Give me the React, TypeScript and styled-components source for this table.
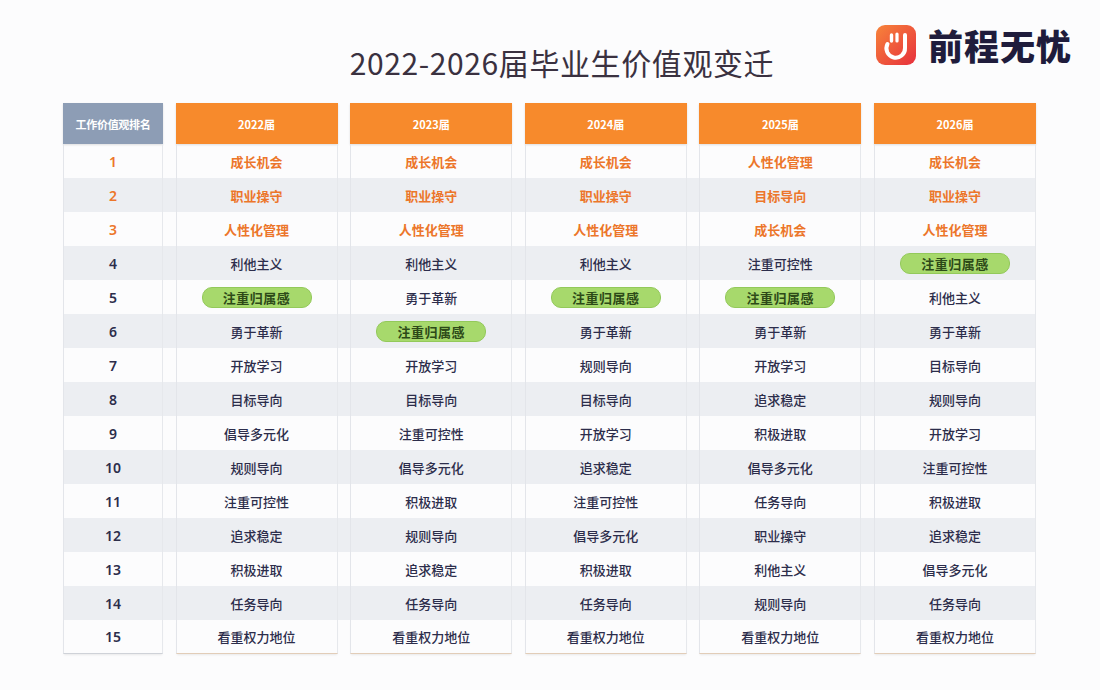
import { FC } from "react";
import styled, { createGlobalStyle } from "styled-components";

const GlobalStyle = createGlobalStyle`
  html, body {
    margin: 0;
    padding: 0;
    background: #fcfcfd;
  }
  body {
    font-family: "Noto Sans CJK SC", "Noto Sans", sans-serif;
  }
`;

const years = ["2022届", "2023届", "2024届", "2025届", "2026届"];

const columns: string[][] = [
  ["成长机会", "职业操守", "人性化管理", "利他主义", "注重归属感", "勇于革新", "开放学习", "目标导向", "倡导多元化", "规则导向", "注重可控性", "追求稳定", "积极进取", "任务导向", "看重权力地位"],
  ["成长机会", "职业操守", "人性化管理", "利他主义", "勇于革新", "注重归属感", "开放学习", "目标导向", "注重可控性", "倡导多元化", "积极进取", "规则导向", "追求稳定", "任务导向", "看重权力地位"],
  ["成长机会", "职业操守", "人性化管理", "利他主义", "注重归属感", "勇于革新", "规则导向", "目标导向", "开放学习", "追求稳定", "注重可控性", "倡导多元化", "积极进取", "任务导向", "看重权力地位"],
  ["人性化管理", "目标导向", "成长机会", "注重可控性", "注重归属感", "勇于革新", "开放学习", "追求稳定", "积极进取", "倡导多元化", "任务导向", "职业操守", "利他主义", "规则导向", "看重权力地位"],
  ["成长机会", "职业操守", "人性化管理", "注重归属感", "利他主义", "勇于革新", "目标导向", "规则导向", "开放学习", "注重可控性", "积极进取", "追求稳定", "倡导多元化", "任务导向", "看重权力地位"],
];

const HIGHLIGHT = "注重归属感";

const Logo: FC = () => (
  <LogoWrap>
    <svg width="40" height="40" viewBox="0 0 40 40">
      <defs>
        <linearGradient id="lg" x1="0" y1="0" x2="1" y2="1">
          <stop offset="0" stopColor="#f7843a" />
          <stop offset="1" stopColor="#e7303d" />
        </linearGradient>
      </defs>
      <rect x="0" y="0" width="40" height="40" rx="9" fill="url(#lg)" />
      <path
        d="M11.5 19 a9.3 9.3 0 1 0 17.5 4 V10"
        fill="none"
        stroke="#fff"
        strokeWidth="4"
        strokeLinecap="round"
      />
      <path d="M15.5 10 v6" stroke="#fff" strokeWidth="3.4" strokeLinecap="round" />
      <path d="M21 9 v7" stroke="#fff" strokeWidth="3.2" strokeLinecap="round" />
    </svg>
    <LogoText>前程无忧</LogoText>
  </LogoWrap>
);

const App: FC = () => {
  return (
    <Page>
      <GlobalStyle />
      <Header>
        <span />
        <Title>2022-2026届毕业生价值观变迁</Title>
        <Logo />
      </Header>

      <Table>
        <HeadRow>
          <RankHead>工作价值观排名</RankHead>
          {years.map((y) => (
            <YearHead key={y}>{y}</YearHead>
          ))}
        </HeadRow>

        {columns[0].map((_, i) => {
          const top = i < 3;
          const last = i === columns[0].length - 1;
          return (
            <Row key={i} $alt={i % 2 === 1}>
              <RankCell $top={top} $last={last}>
                {i + 1}
              </RankCell>
              {columns.map((col, c) => (
                <ValueCell key={c} $top={top} $last={last}>
                  {col[i] === HIGHLIGHT ? <Pill>{col[i]}</Pill> : col[i]}
                </ValueCell>
              ))}
            </Row>
          );
        })}
      </Table>
    </Page>
  );
};

export default App;

const Page = styled.div`
  width: 1100px;
  height: 690px;
  overflow: hidden;
  background: #fcfcfd;
`;

const Header = styled.div`
  display: grid;
  grid-template-columns: 1fr auto 1fr;
  align-items: start;
  height: 103px;
`;

const Title = styled.h1`
  margin: 41px 0 0;
  padding-left: 24px;
  font-size: 30px;
  line-height: 42px;
  font-weight: 400;
  color: #3a3140;
  letter-spacing: 0.6px;
  white-space: nowrap;
`;

const LogoWrap = styled.div`
  justify-self: end;
  margin: 25px 28px 0 0;
  display: flex;
  align-items: center;
  gap: 12px;
`;

const LogoText = styled.div`
  font-size: 35px;
  line-height: 40px;
  font-weight: 900;
  color: #1f1c3c;
  letter-spacing: 1px;
`;

const Table = styled.div`
  margin-left: 63px;
  width: 973px;
`;

const gridCols = `
  display: grid;
  grid-template-columns: 100px repeat(5, 162px);
  column-gap: 12.6px;
`;

const HeadRow = styled.div`
  ${gridCols}
  height: 41px;
`;

const HeadCell = styled.div`
  display: flex;
  align-items: center;
  justify-content: center;
  color: #fff;
  font-size: 11px;
  font-weight: 700;
  box-shadow: 0 1px 2px rgba(0, 0, 0, 0.12);
`;

const RankHead = styled(HeadCell)`
  background: #8d9db5;
  letter-spacing: -0.3px;
`;

const YearHead = styled(HeadCell)`
  background: #f78a2c;
`;

const Row = styled.div<{ $alt: boolean }>`
  ${gridCols}
  height: 34px;
  background: ${(p) => (p.$alt ? "#eceef2" : "transparent")};
`;

const Cell = styled.div<{ $top: boolean; $last: boolean }>`
  display: flex;
  align-items: center;
  justify-content: center;
  font-size: 13px;
  color: ${(p) => (p.$top ? "#ec762a" : "#2c2d4b")};
  font-weight: ${(p) => (p.$top ? 700 : 500)};
  border-left: 1px solid #e3e5ea;
  border-right: 1px solid #e6e8ec;
  border-bottom: ${(p) => (p.$last ? "1px solid #cfd2d8" : "none")};
  box-shadow: ${(p) => (p.$last ? "0 2px 2px -1px rgba(0,0,0,0.08)" : "none")};
`;

const RankCell = styled(Cell)`
  font-family: "Noto Sans", sans-serif;
  font-size: 14px;
  font-weight: 600;
`;

const ValueCell = styled(Cell)`
  border-bottom-color: ${(p) => (p.$last ? "#e2cdb8" : "transparent")};
`;

const Pill = styled.span`
  display: inline-flex;
  align-items: center;
  justify-content: center;
  width: 108px;
  height: 19px;
  border-radius: 10px;
  background: #a7d96c;
  border: 1px solid #93c95a;
  color: #2d4a18;
  font-weight: 700;
  font-size: 13px;
  letter-spacing: 0.5px;
`;
